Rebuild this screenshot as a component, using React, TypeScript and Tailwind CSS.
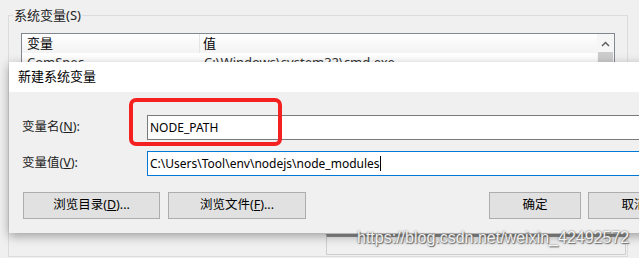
const ui = '"Segoe UI", "Noto Sans", "Noto Sans CJK SC", sans-serif';

function Btn({ children, className = '' }: { children: React.ReactNode; className?: string }) {
  return (
    <button
      className={`shrink-0 h-[27px] border border-[#adadad] bg-[#e1e1e1] text-[12.5px] text-black flex items-center justify-center ${className}`}
    >
      {children}
    </button>
  );
}

function BackgroundWindow() {
  return (
    <fieldset className="ml-2 w-[620px] h-[251px] mt-[6px] border border-[#dcdcdc]">
      <legend className="ml-[4px] px-[1px] text-[13px] leading-[18px] text-[#222]">系统变量(S)</legend>
      <div className="ml-[12px] mt-[9px] w-[594px] h-[190px] border border-[#828790] bg-white flex">
        <div className="flex-1 flex flex-col">
          <div className="h-[19px] flex text-[13px] leading-[19px] bg-gradient-to-b from-white to-[#f3f3f3]">
            <div className="w-[178px] pl-[5px] border-r border-[#e5e5e5]">变量</div>
            <div className="pl-[3px]">值</div>
          </div>
          <div className="flex text-[13px] leading-[19px] text-[#333]">
            <div className="w-[178px] pl-[5px]">ComSpec</div>
            <div className="pl-[4px]">C:\Windows\system32\cmd.exe</div>
          </div>
        </div>
        <div className="w-[17px] bg-[#f6f6f6] flex flex-col items-center">
          <svg width="9" height="6" viewBox="0 0 9 6" className="mt-[7px]">
            <path d="M1 5 L4.5 1.5 L8 5" fill="none" stroke="#606060" strokeWidth="1.5" />
          </svg>
          <div className="mt-[5px] w-[15px] h-[40px] bg-[#cdcdcd]" />
        </div>
      </div>
      <div className="mt-[11px] ml-[317px] w-[300px] h-[21px] border border-[#cfcfcf] border-t-[3px] border-t-[#8c8c8c]" />
    </fieldset>
  );
}

function Dialog() {
  return (
    <div className="absolute left-[9px] top-[62px] w-[640px] bg-[#f0f0f0] shadow-[0_3px_10px_rgba(0,0,0,0.35)]">
      <div className="h-[30px] bg-white flex items-center pl-[9px] text-[13px] text-black">新建系统变量</div>
      <div className="pl-[13px] pt-[23px] pb-[14px]">
        <div className="flex items-center h-[25px]">
          <div className="w-[125px] shrink-0 text-[12.5px] text-[#222]">
            变量名(<u>N</u>):
          </div>
          <div className="flex-1 h-[25px] bg-white border border-[#7a7a7a] border-r-0 flex items-center pl-[2px] text-[12px] text-black">
            NODE_PATH
          </div>
        </div>
        <div className="flex items-center h-[25px] mt-[11px]">
          <div className="w-[125px] shrink-0 text-[12.5px] text-[#222]">
            变量值(<u>V</u>):
          </div>
          <div className="flex-1 h-[25px] bg-white border border-[#0078d7] border-r-0 flex items-center pl-[2px] text-[12px] text-black">
            C:\Users\Tool\env\nodejs\node_modules
            <span className="w-px h-[15px] bg-black" />
          </div>
        </div>
        <div className="flex mt-[16px]">
          <Btn className="ml-px w-[137px]">
            浏览目录(<u>D</u>)...
          </Btn>
          <Btn className="ml-[8px] w-[138px]">
            浏览文件(<u>F</u>)...
          </Btn>
          <Btn className="ml-[183px] w-[92px]">确定</Btn>
          <Btn className="ml-[7px] w-[92px]">取消</Btn>
        </div>
      </div>
    </div>
  );
}

export default function App() {
  return (
    <div className="relative w-[639px] h-[258px] overflow-hidden bg-[#f0f0f0] text-black" style={{ fontFamily: ui }}>
      <BackgroundWindow />
      <Dialog />
      <div className="absolute left-[129px] top-[98px] w-[153px] h-[48px] border-[4px] border-[#f52020] rounded-[7px]" />
      <div
        className="absolute left-[357px] top-[228px] text-[16px] leading-[20px] text-white/90 [text-shadow:0_0_2px_#555,1px_1px_1px_#777]"
        style={{ fontFamily: '"Liberation Sans", Arial, sans-serif' }}
      >
        https://blog.csdn.net/weixin_42492572
      </div>
    </div>
  );
}
